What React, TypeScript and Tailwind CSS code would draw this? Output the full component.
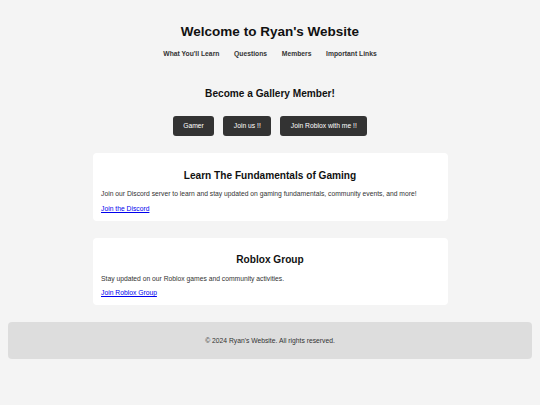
import React from "react";

export default function App() {
  const navItems = ["What You'll Learn", "Questions", "Members", "Important Links"];
  const buttons = ["Gamer", "Join us !!", "Join Roblox with me !!"];
  return (
    <div
      className="min-h-[405px] bg-[#f4f4f4] text-[#333] flex flex-col"
      style={{ fontFamily: '"Liberation Sans", Arial, sans-serif' }}
    >
      <header className="flex flex-col items-center pt-[24px]">
        <h1 className="text-[13.5px] leading-[16px] font-bold text-[#111] m-0">
          Welcome to Ryan's Website
        </h1>
        <nav className="mt-[10px] flex gap-[14.7px] text-[6.75px] leading-[8px] font-bold text-[#333]">
          {navItems.map((n) => (
            <span key={n}>{n}</span>
          ))}
        </nav>
      </header>

      <section className="flex flex-col items-center mt-[29.5px]">
        <h2 className="text-[10.125px] leading-[12px] font-bold text-[#111]">
          Become a Gallery Member!
        </h2>
        <div className="mt-[16.5px] flex gap-[9px]">
          {buttons.map((b) => (
            <button
              key={b}
              className="h-[20px] px-[10.5px] bg-[#333] text-white text-[6.75px] leading-[8px] rounded-[3px]"
            >
              {b}
            </button>
          ))}
        </div>
      </section>

      <main className="flex flex-col items-center mt-[17px] gap-[17px]">
        <div className="w-[355px] bg-white rounded-[4px] px-[8.5px] pt-[16.5px] pb-[8.5px]">
          <h2 className="text-[10.125px] leading-[12px] font-bold text-center text-[#111]">
            Learn The Fundamentals of Gaming
          </h2>
          <p className="mt-[8.5px] text-[6.75px] leading-[8px]">
            Join our Discord server to learn and stay updated on gaming fundamentals, community events, and more!
          </p>
          <div className="mt-[6.75px] text-[6.75px] leading-[8px]">
            <a href="#" className="text-[#0000ee] underline">Join the Discord</a>
          </div>
        </div>
        <div className="w-[355px] bg-white rounded-[4px] px-[8.5px] pt-[16px] pb-[8px]">
          <h2 className="text-[10.125px] leading-[12px] font-bold text-center text-[#111]">
            Roblox Group
          </h2>
          <p className="mt-[8.5px] text-[6.75px] leading-[8px]">
            Stay updated on our Roblox games and community activities.
          </p>
          <div className="mt-[6.5px] text-[6.75px] leading-[8px]">
            <a href="#" className="text-[#0000ee] underline">Join Roblox Group</a>
          </div>
        </div>
      </main>

      <footer className="mx-[8px] mt-[17px] h-[37px] bg-[#ddd] rounded-[4px] flex items-center justify-center text-[6.75px] leading-[8px] text-[#333]">
        © 2024 Ryan's Website. All rights reserved.
      </footer>
    </div>
  );
}
